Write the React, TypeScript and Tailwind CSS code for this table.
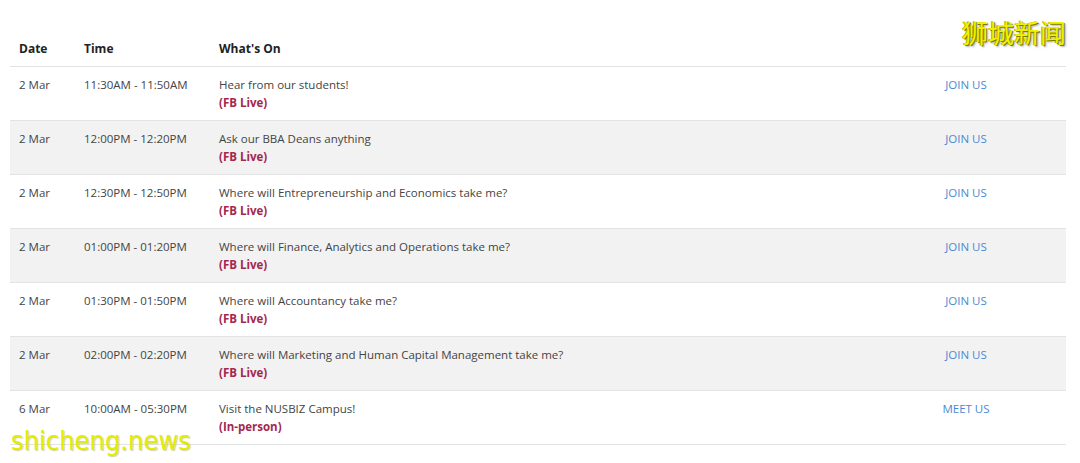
const rows = [
  { date: "2 Mar", time: "11:30AM - 11:50AM", title: "Hear from our students!", tag: "(FB Live)", action: "JOIN US" },
  { date: "2 Mar", time: "12:00PM - 12:20PM", title: "Ask our BBA Deans anything", tag: "(FB Live)", action: "JOIN US" },
  { date: "2 Mar", time: "12:30PM - 12:50PM", title: "Where will Entrepreneurship and Economics take me?", tag: "(FB Live)", action: "JOIN US" },
  { date: "2 Mar", time: "01:00PM - 01:20PM", title: "Where will Finance, Analytics and Operations take me?", tag: "(FB Live)", action: "JOIN US" },
  { date: "2 Mar", time: "01:30PM - 01:50PM", title: "Where will Accountancy take me?", tag: "(FB Live)", action: "JOIN US" },
  { date: "2 Mar", time: "02:00PM - 02:20PM", title: "Where will Marketing and Human Capital Management take me?", tag: "(FB Live)", action: "JOIN US" },
  { date: "6 Mar", time: "10:00AM - 05:30PM", title: "Visit the NUSBIZ Campus!", tag: "(In-person)", action: "MEET US" },
]

export default function App() {
  return (
    <div className="relative w-[1080px] h-[463px] bg-white overflow-hidden font-['Open_Sans',sans-serif] text-[11.5px] text-[#444]">
      <div className="pl-[10px] pt-[30px] w-[1066px]">
        <div className="grid grid-cols-[74px_135px_1fr_200px] h-[37px] items-end pb-[8px] border-b border-[#e3e3e3] font-bold text-[12px] text-[#222] leading-[18px]">
          <div className="pl-[9px]">Date</div>
          <div>Time</div>
          <div>What's On</div>
          <div></div>
        </div>
        {rows.map((r, i) => (
          <div
            key={i}
            className={
              "grid grid-cols-[74px_135px_1fr_200px] h-[54px] pt-[9px] leading-[18px] border-b border-[#e3e3e3] " +
              (i % 2 === 1 ? "bg-[#f2f2f2]" : "bg-white")
            }
          >
            <div className="pl-[9px]">{r.date}</div>
            <div>{r.time}</div>
            <div>
              <div>{r.title}</div>
              <div className="font-bold text-[#a3284f]">{r.tag}</div>
            </div>
            <div className="text-center text-[#4b8ad2]">{r.action}</div>
          </div>
        ))}
      </div>

      <div className="absolute right-[14px] top-[16px] text-[26px] leading-[32px] text-[#f2f200] font-['Noto_Sans_CJK_SC',sans-serif] [text-shadow:1px_1px_0_#7a7a00,-1px_0_0_#b0b000,2px_2px_2px_rgba(0,0,0,0.3)]">
        狮城新闻
      </div>
      <div className="absolute left-[11px] top-[423px] text-[27px] leading-[36px] font-light text-[#e2ec00] font-['DejaVu_Sans_Condensed','DejaVu_Sans',sans-serif] [text-shadow:1px_1px_1px_rgba(120,120,0,0.35)]">
        shicheng.news
      </div>
    </div>
  )
}
